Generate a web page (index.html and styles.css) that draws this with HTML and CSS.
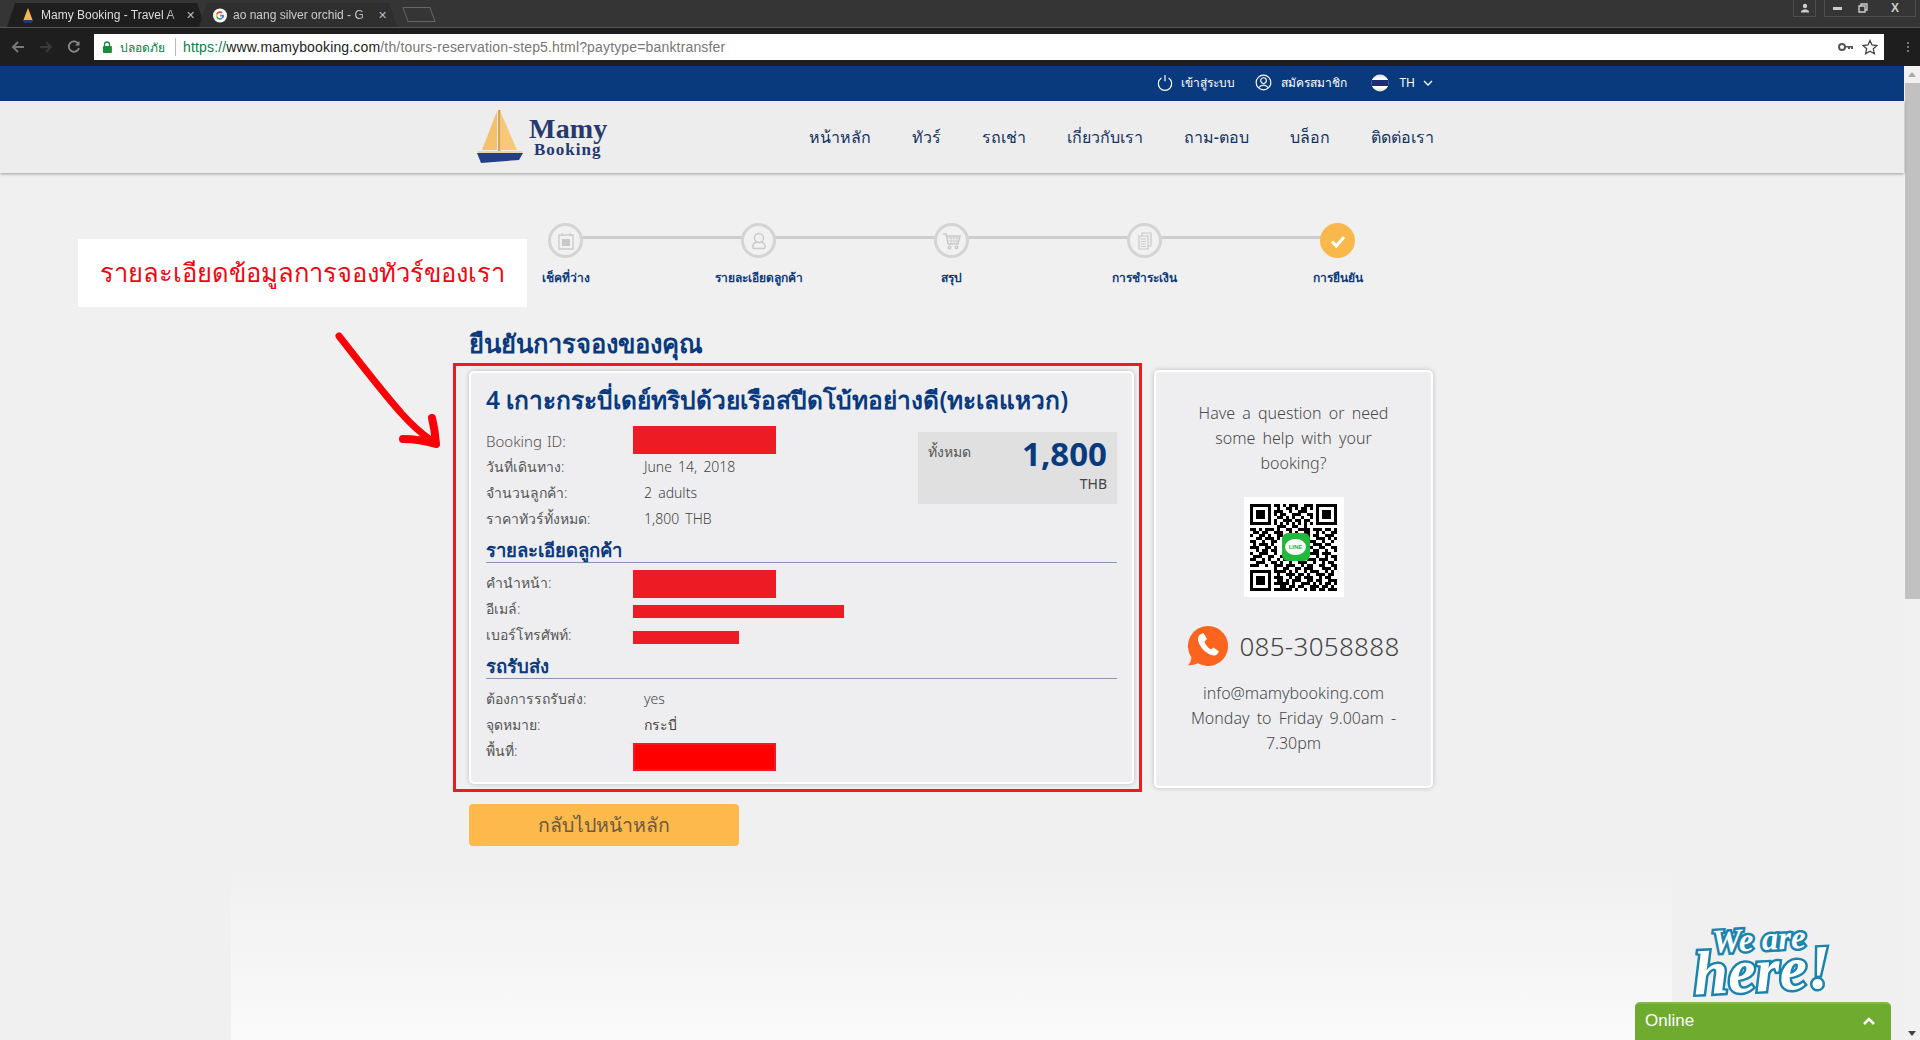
FILE: index.html
```html
<!DOCTYPE html>
<html lang="th">
<head>
<meta charset="utf-8">
<title>Mamy Booking</title>
<link rel="stylesheet" href="styles.css">
</head>
<body>
<div class="chrome">
  <div class="tabs">
    <div class="tab tab-active">
      <svg class="tab-ico" viewBox="0 0 14 16"><path d="M7 0 2 13h10z" fill="#f3b64c"/><path d="M1 13h12l-2 3H3z" fill="#1d3a78"/></svg>
      <span class="tab-title">Mamy Booking - Travel A</span><span class="tab-x">✕</span>
    </div>
    <div class="tab">
      <svg class="tab-ico" viewBox="0 0 16 16"><circle cx="8" cy="8" r="8" fill="#fff"/><path d="M8 3.2a4.8 4.8 0 0 1 3.2 1.2L9.900 5.700A3 3 0 0 0 5.200 7L3.700 5.800A4.800 4.800 0 0 1 8 3.200z" fill="#ea4335"/><path d="M3.700 5.800 5.200 7a3 3 0 0 0 0 2L3.700 10.200a4.800 4.800 0 0 1 0-4.400z" fill="#fbbc05"/><path d="M3.700 10.200 5.200 9a3 3 0 0 0 4.500 1.500l1.500 1.200A4.800 4.800 0 0 1 3.700 10.200z" fill="#34a853"/><path d="M8 7.200h4.700a4.800 4.800 0 0 1-1.500 4.500L9.700 10.500a2 2 0 0 0 .8-1.500H8z" fill="#4285f4"/></svg>
      <span class="tab-title">ao nang silver orchid - G</span><span class="tab-x">✕</span>
    </div>
    <div class="tab-new"></div>
    <div class="win-btns">
      <span class="win-user"><svg viewBox="0 0 10 10" width="10" height="10"><circle cx="5" cy="3" r="2.200" fill="#ccc"/><path d="M1 9.500h8V8Q5 4.500 1 8z" fill="#ccc"/></svg></span>
      <span class="win-group">
        <span class="win-btn"><span class="win-min"></span></span>
        <span class="win-btn"><svg viewBox="0 0 10 10" width="10" height="10" fill="none" stroke="#ccc" stroke-width="1.400"><path d="M3 3V1h6v6H7M1 3h6v6H1z"/></svg></span>
        <span class="win-btn win-close">X</span>
      </span>
    </div>
  </div>
  <div class="toolbar">
    <svg class="nav-ico" viewBox="0 0 14 14"><path d="M13 7H2M7 2 2 7l5 5" fill="none" stroke="#777" stroke-width="2"/></svg>
    <svg class="nav-ico" viewBox="0 0 14 14"><path d="M1 7h11M7 2l5 5-5 5" fill="none" stroke="#3a3a3a" stroke-width="2"/></svg>
    <svg class="nav-ico" viewBox="0 0 14 14"><path d="M11.500 4A5.200 5.200 0 1 0 12 8" fill="none" stroke="#8a8a8a" stroke-width="1.800"/><path d="M12.500 1v4.500H8z" fill="#8a8a8a"/></svg>
    <div class="omnibox">
      <svg class="lock" viewBox="0 0 10 12"><path d="M2.500 5V3.500a2.500 2.500 0 0 1 5 0V5" fill="none" stroke="#1b8a3a" stroke-width="1.300"/><rect y="5" width="10" height="7" rx="1" x="1" fill="#1b8a3a" transform="scale(.9 1)"/></svg>
      <span class="secure">ปลอดภัย</span>
      <span class="url"><span class="u-https">https://</span><span class="u-host">www.mamybooking.com</span>/th/tours-reservation-step5.html?paytype=banktransfer</span>
      <span class="omni-right">
        <svg viewBox="0 0 16 10" width="16" height="10"><circle cx="4" cy="5" r="3" fill="none" stroke="#555" stroke-width="2"/><path d="M7 4h8v3h-2V5.500h-1V7h-2V5.500H7z" fill="#555"/></svg>
        <svg viewBox="0 0 16 16" width="16" height="16"><path d="M8 1.500 10 6l5 .5-3.700 3.300 1.100 4.900L8 12.200l-4.400 2.500 1.100-4.900L1 6.500 6 6z" fill="none" stroke="#444" stroke-width="1.300"/></svg>
      </span>
    </div>
    <span class="kebab"><i></i><i></i><i></i></span>
  </div>
</div>

<div class="viewport">
  <main class="page">
    <div class="topbar">
      <span class="top-item"><svg viewBox="0 0 18 20" width="16" height="18"><path d="M5 4.500a7.500 7.500 0 1 0 8 0M9 1v7" fill="none" stroke="#fff" stroke-width="1.300"/></svg>เข้าสู่ระบบ</span>
      <span class="top-item top-user"><svg viewBox="0 0 18 18" width="17" height="17" fill="none" stroke="#fff" stroke-width="1.200"><circle cx="9" cy="9" r="7.800"/><circle cx="9" cy="7" r="3"/><path d="M3.800 14.500Q9 9 14.200 14.500"/></svg>สมัครสมาชิก</span>
      <span class="top-item top-lang"><svg viewBox="0 0 18 18" width="18" height="18"><defs><clipPath id="fc"><circle cx="9" cy="9" r="8.500"/></clipPath></defs><g clip-path="url(#fc)"><rect width="18" height="18" fill="#e8e8ee"/><rect y="6" width="18" height="6" fill="#1b2f6e"/><rect y="3.500" width="18" height="2.500" fill="#fff"/><rect y="12" width="18" height="2.500" fill="#fff"/></g></svg>TH<svg class="chev" viewBox="0 0 10 6" width="10" height="6"><path d="M1 1l4 4 4-4" fill="none" stroke="#fff" stroke-width="1.300"/></svg></span>
    </div>
    <header class="mainnav">
      <div class="logo">
        <svg class="logo-boat" viewBox="0 0 48 54" width="48" height="54"><path d="M21 1 6 40h15z" fill="#f5c26c"/><path d="M25 3v37h16z" fill="#f6c878"/><path d="M22 0h2.500v41H22z" fill="#dba34a"/><path d="M1 41h46l-1 2H2z" fill="#e9d7a8"/><path d="M1 43h46l-4 7-38 3z" fill="#233f82"/></svg>
        <div class="logo-text"><span class="logo-mamy">Mamy</span><span class="logo-book">Booking</span></div>
      </div>
      <nav class="menu">
        <a>หน้าหลัก</a><a>ทัวร์</a><a>รถเช่า</a><a>เกี่ยวกับเรา</a><a>ถาม-ตอบ</a><a>บล็อก</a><a>ติดต่อเรา</a>
      </nav>
    </header>

    <div class="container">
      <ol class="steps">
        <li class="step"><span class="dot"><svg viewBox="0 0 20 20" width="20" height="20"><path d="M3 4h14v14H3z" fill="none" stroke="#cbcbcb" stroke-width="1.300"/><path d="M6 2v3M14 2v3" stroke="#cbcbcb" stroke-width="1.300"/><path d="M6 8h8v7H6z" fill="#c9c9c9"/></svg></span><span class="step-label">เช็คที่ว่าง</span></li>
        <li class="step"><span class="dot"><svg viewBox="0 0 20 20" width="20" height="20" fill="none" stroke="#c9c9c9" stroke-width="1.400"><circle cx="10" cy="7" r="4.500"/><path d="M4 17.500q-1-5 3.500-6.500M4 17.500h11l1.500-1.500M12.500 11q3 1 4 5"/></svg></span><span class="step-label">รายละเอียดลูกค้า</span></li>
        <li class="step"><span class="dot"><svg viewBox="0 0 20 20" width="20" height="20" fill="none" stroke="#c9c9c9" stroke-width="1.400"><path d="M1 3h3l2 10h10l2-8H5"/><path d="M5 7h12M6 10h11M9 5v8M12 5v8M15 5v8" stroke-width=".8"/><circle cx="7.500" cy="16.500" r="1.300"/><circle cx="14.500" cy="16.500" r="1.300"/></svg></span><span class="step-label">สรุป</span></li>
        <li class="step"><span class="dot"><svg viewBox="0 0 20 20" width="20" height="20" fill="none" stroke="#c9c9c9" stroke-width="1.200"><path d="M7 2h9v13H7z"/><path d="M4 5h9v13H4z" fill="#f1f1f1"/><path d="M6 8h5M6 10.500h5M6 13h5M6 15.500h5"/></svg></span><span class="step-label">การชำระเงิน</span></li>
        <li class="step step-on"><span class="dot"><svg viewBox="0 0 20 20" width="20" height="20"><path d="M4 10.500 8.300 15 16 6" fill="none" stroke="#fff" stroke-width="3"/></svg></span><span class="step-label">การยืนยัน</span></li>
      </ol>

      <h1 class="confirm-title">ยืนยันการจองของคุณ</h1>

      <div class="content">
        <section class="card card-main">
          <h2 class="tour-title">4 เกาะกระบี่เดย์ทริปด้วยเรือสปีดโบ้ทอย่างดี(ทะเลแหวก)</h2>
          <div class="summary">
            <div class="rows">
              <div class="row"><span class="lbl lbl-en">Booking ID:</span><span class="redact r-big"></span></div>
              <div class="row"><span class="lbl">วันที่เดินทาง:</span><span class="val">June 14, 2018</span></div>
              <div class="row"><span class="lbl">จำนวนลูกค้า:</span><span class="val">2 adults</span></div>
              <div class="row"><span class="lbl">ราคาทัวร์ทั้งหมด:</span><span class="val">1,800 THB</span></div>
            </div>
            <div class="total">
              <div class="total-top"><span class="total-lbl">ทั้งหมด</span><span class="total-num">1,800</span></div>
              <div class="total-cur">THB</div>
            </div>
          </div>
          <h3 class="sec-title">รายละเอียดลูกค้า</h3>
          <div class="rows rows-sec">
            <div class="row"><span class="lbl">คำนำหน้า:</span><span class="redact r-big r-name"></span></div>
            <div class="row"><span class="lbl">อีเมล์:</span><span class="redact r-mail"></span></div>
            <div class="row"><span class="lbl">เบอร์โทรศัพท์:</span><span class="redact r-tel"></span></div>
          </div>
          <h3 class="sec-title">รถรับส่ง</h3>
          <div class="rows rows-sec">
            <div class="row"><span class="lbl">ต้องการรถรับส่ง:</span><span class="val">yes</span></div>
            <div class="row"><span class="lbl">จุดหมาย:</span><span class="val">กระบี่</span></div>
            <div class="row"><span class="lbl">พื้นที่:</span><span class="redact r-big r-pure"></span></div>
          </div>
        </section>

        <aside class="card card-side">
          <p class="help">Have a question or need some help with your booking?</p>
          <div class="qr">
            <svg viewBox="0 0 29 29" width="87" height="87" shape-rendering="crispEdges"><path fill="none" stroke="#000" d="M0 .5h7M0 6.500h7M0 1.500h1M6 1.500h1M0 2.500h1M2 2.500h3M6 2.500h1M0 3.500h1M2 3.500h3M6 3.500h1M0 4.500h1M2 4.500h3M6 4.500h1M0 5.500h1M6 5.500h1M22 .5h7M22 6.500h7M22 1.500h1M28 1.500h1M22 2.500h1M24 2.500h3M28 2.500h1M22 3.500h1M24 3.500h3M28 3.500h1M22 4.500h1M24 4.500h3M28 4.500h1M22 5.500h1M28 5.500h1M0 22.500h7M0 28.500h7M0 23.500h1M6 23.500h1M0 24.500h1M2 24.500h3M6 24.500h1M0 25.500h1M2 25.500h3M6 25.500h1M0 26.500h1M2 26.500h3M6 26.500h1M0 27.500h1M6 27.500h1M8 .5h2M11 .5h1M13 .5h3M18 .5h3M9 1.500h1M12 1.500h2M15 1.500h1M17 1.500h2M20 1.500h1M8 2.500h3M13 2.500h1M16 2.500h3M8 3.500h1M10 3.500h2M14 3.500h3M19 3.500h2M9 4.500h2M12 4.500h1M14 4.500h1M17 4.500h1M20 4.500h1M8 5.500h1M11 5.500h3M15 5.500h2M18 5.500h2M8 6.500h1M10 6.500h1M12 6.500h1M14 6.500h1M16 6.500h1M18 6.500h1M20 6.500h1M9 7.500h3M14 7.500h2M18 7.500h1M0 8.500h2M3 8.500h1M5 8.500h3M9 8.500h1M12 8.500h2M16 8.500h4M21 8.500h3M25 8.500h2M28 8.500h1M1 9.500h2M4 9.500h2M8 9.500h3M13 9.500h1M15 9.500h1M18 9.500h2M22 9.500h1M24 9.500h1M27 9.500h2M0 10.500h1M3 10.500h2M6 10.500h1M9 10.500h2M12 10.500h2M17 10.500h3M21 10.500h2M25 10.500h3M2 11.500h2M5 11.500h3M9 11.500h1M11 11.500h1M14 11.500h2M19 11.500h1M22 11.500h3M26 11.500h1M28 11.500h1M0 12.500h2M4 12.500h1M7 12.500h2M20 12.500h2M24 12.500h1M27 12.500h1M1 13.500h1M3 13.500h3M7 13.500h1M21 13.500h3M25 13.500h2M0 14.500h3M5 14.500h2M8 14.500h1M20 14.500h1M23 14.500h2M27 14.500h2M2 15.500h1M4 15.500h2M7 15.500h2M21 15.500h2M25 15.500h1M28 15.500h1M0 16.500h1M3 16.500h3M8 16.500h1M20 16.500h3M24 16.500h3M1 17.500h3M6 17.500h2M10 17.500h2M14 17.500h1M17 17.500h2M22 17.500h1M25 17.500h1M27 17.500h2M0 18.500h2M4 18.500h1M6 18.500h1M9 18.500h1M11 18.500h3M15 18.500h2M19 18.500h3M23 18.500h3M28 18.500h1M2 19.500h3M7 19.500h2M10 19.500h1M13 19.500h1M16 19.500h3M21 19.500h1M24 19.500h1M26 19.500h2M0 20.500h3M5 20.500h1M8 20.500h3M12 20.500h3M17 20.500h1M19 20.500h2M23 20.500h2M27 20.500h2M8 21.500h1M11 21.500h2M15 21.500h2M18 21.500h3M24 21.500h3M28 21.500h1M8 22.500h4M13 22.500h1M15 22.500h1M18 22.500h1M20 22.500h3M25 22.500h1M27 22.500h1M9 23.500h1M12 23.500h3M16 23.500h2M19 23.500h1M22 23.500h3M26 23.500h2M8 24.500h3M13 24.500h1M15 24.500h2M18 24.500h3M23 24.500h1M25 24.500h2M9 25.500h2M12 25.500h1M14 25.500h3M19 25.500h2M22 25.500h2M26 25.500h3M8 26.500h5M14 26.500h1M17 26.500h3M21 26.500h1M23 26.500h1M25 26.500h2M28 26.500h1M10 27.500h2M13 27.500h2M16 27.500h2M20 27.500h3M24 27.500h2M27 27.500h1M8 28.500h6M15 28.500h1M18 28.500h1M20 28.500h2M23 28.500h2M26 28.500h3"/></svg>
            <span class="line-badge"><span class="line-bubble">LINE</span></span>
          </div>
          <div class="phone">
            <svg viewBox="0 0 42 42" width="42" height="42"><path d="M21 1a20 20 0 1 1-10 37.300Q7 40 1 40.500q3-3 3.500-8A20 20 0 0 1 21 1z" fill="#fb641e"/><path d="M13 9.500l3.500-1.500 3.500 6-2.500 2.500q1.500 5 6.500 8l2.500-2 5.500 4-2 3q-3 2.500-9-1-8-5-10-13-.5-4 2-6z" fill="#fff"/></svg>
            <span class="phone-num">085-3058888</span>
          </div>
          <p class="contact">info@mamybooking.com<br>Monday to Friday 9.00am - 7.30pm</p>
        </aside>
      </div>

      <a class="home-btn">กลับไปหน้าหลัก</a>
    </div>
    <div class="fade"></div>
  </main>
  <div class="scrollbar">
    <svg class="sb-arrow" viewBox="0 0 8 5" width="8" height="5"><path d="M0 5 4 0l4 5z" fill="#aaa"/></svg>
    <div class="sb-thumb"></div>
    <svg class="sb-arrow sb-down" viewBox="0 0 8 5" width="8" height="5"><path d="M0 0l4 5 4-5z" fill="#444"/></svg>
  </div>

  <div class="note-banner">รายละเอียดข้อมูลการจองทัวร์ของเรา</div>
  <svg class="note-arrow" viewBox="0 0 110 120" width="110" height="120"><path d="M5 4C30 36 50 62 68 82S92 104 102 112" fill="none" stroke="#fb0007" stroke-width="7" stroke-linecap="round"/><path d="M98 86q3 12 4 26q-17-5-33-5" fill="none" stroke="#fb0007" stroke-width="8" stroke-linecap="round" stroke-linejoin="round"/></svg>
  <div class="note-box"></div>

  <div class="chat">
    <div class="chat-art"><span class="art-we">We are</span><span class="art-here">here!</span></div>
    <div class="chat-bar"><span>Online</span><svg viewBox="0 0 14 9" width="14" height="9"><path d="M2 7l5-5 5 5" fill="none" stroke="#fff" stroke-width="2.500"/></svg></div>
  </div>
</div>
</body>
</html>
```
FILE: styles.css
```css
* { box-sizing: border-box; }
html, body { margin: 0; height: 100%; overflow: hidden; }
body { font-family: "Noto Sans", "Open Sans", sans-serif; background: #f0f0f0; color: #444; width: 1920px; height: 1040px; }
h1, h2, h3, p, ol { margin: 0; padding: 0; }

.chrome { height: 66px; background: #1e1e1e; }
.tabs { height: 28px; background: #353535; border-bottom: 1px solid #555; display: flex; align-items: flex-end; padding-left: 7px; position: relative; }
.tab { width: 198px; height: 24px; margin-right: -6px; display: flex; align-items: center; gap: 6px; padding: 0 10px 0 14px; color: #ccc; font: 12px "Liberation Sans", sans-serif; background: #2f2f2f; clip-path: polygon(8px 0, calc(100% - 8px) 0, 100% 100%, 0 100%); }
.tab-active { background: #1e1e1e; color: #ddd; }
.tab-ico { width: 14px; height: 15px; flex: none; }
.tab-title { flex: 1; white-space: nowrap; -webkit-mask-image: linear-gradient(90deg, #000 90%, rgba(0,0,0,.35)); mask-image: linear-gradient(90deg, #000 90%, rgba(0,0,0,.35)); }
.tab-x { font-size: 11px; color: #bbb; }
.tab-new { width: 28px; height: 15px; margin: 0 0 5px 14px; border: 1px solid #666; transform: skewX(20deg); }
.win-btns { margin-left: auto; height: 17px; align-self: flex-start; display: flex; gap: 8px; margin-right: 4px; }
.win-user { width: 23px; height: 17px; border: 1px solid #4d4d4d; border-top: 0; display: flex; align-items: center; justify-content: center; }
.win-group { display: flex; border: 1px solid #4d4d4d; border-top: 0; }
.win-btn { width: 25px; height: 16px; display: flex; align-items: center; justify-content: center; color: #ccc; font: bold 12px "Liberation Sans", sans-serif; }
.win-close { width: 40px; }
.win-min { width: 9px; height: 3px; background: #ccc; }

.toolbar { height: 38px; display: flex; align-items: center; padding-left: 11px; }
.nav-ico { width: 14px; height: 14px; margin-right: 14px; flex: none; }
.omnibox { width: 1790px; margin-left: -1px; height: 26px; background: #fff; display: flex; align-items: center; padding-left: 8px; font: 14px "Liberation Sans", sans-serif; color: #777; white-space: nowrap; }
.lock { width: 10px; height: 12px; flex: none; }
.secure { color: #0b8043; font-size: 12px; margin: 0 10px 0 8px; font-family: "Noto Sans", sans-serif; }
.url { border-left: 1px solid #bbb; padding-left: 7px; line-height: 18px; letter-spacing: .16px; }
.u-https { color: #0b8043; }
.u-host { color: #222; }
.omni-right { margin-left: auto; display: flex; gap: 8px; align-items: center; padding-right: 6px; }
.kebab { display: flex; flex-direction: column; gap: 2px; margin-left: 23px; }
.kebab i { width: 2px; height: 2px; background: #777; }

.viewport { height: 974px; position: relative; overflow: hidden; display: flex; }
.page { width: 1904px; height: 974px; position: relative; }
.scrollbar { width: 16px; background: #f1f1f1; display: flex; flex-direction: column; align-items: center; padding-top: 6px; }
.sb-thumb { width: 15px; height: 516px; background: #c1c1c1; margin-top: 6px; }
.sb-down { margin-top: auto; margin-bottom: 4px; }

.topbar { height: 35px; background: #0a3a7e; color: #fff; display: flex; align-items: center; justify-content: flex-end; gap: 20px; padding: 0 471px 2px 0; font-size: 12px; }
.top-item { display: flex; align-items: center; gap: 8px; }
.top-user { gap: 9px; }
.top-lang { margin-left: 4px; gap: 10px; }
.chev { margin-left: -2px; }
.mainnav { height: 72px; background: #ededed; box-shadow: 0 1px 3px rgba(0,0,0,.35); display: flex; align-items: center; padding: 0 470px 0 476px; justify-content: space-between; position: relative; }
.logo { display: flex; align-items: center; gap: 5px; }
.logo-text { display: flex; flex-direction: column; color: #26396f; font-family: "Liberation Serif", serif; font-weight: bold; line-height: 1; margin-top: -1px; }
.logo-mamy { font-size: 28px; letter-spacing: .2px; line-height: 26px; }
.logo-book { font-size: 17px; letter-spacing: 1px; padding-left: 5px; line-height: 15px; }
.menu { display: flex; gap: 41px; font-size: 16px; color: #13325f; font-weight: 500; }

.container { width: 982px; margin-left: 469px; position: relative; z-index: 1; }
.steps { list-style: none; display: flex; height: 84px; margin-top: 50px; width: 966px; position: relative; }
.step { width: 193px; display: flex; flex-direction: column; align-items: center; position: relative; font-size: 12px; }
.step::before { content: ""; position: absolute; left: 96px; width: 193px; top: 13px; height: 3px; background: #cdcdcd; }
.step:last-child::before { display: none; }
.dot { width: 35px; height: 35px; border-radius: 50%; border: 3px solid #d4d4d4; background: #f1f1f1; display: flex; align-items: center; justify-content: center; position: relative; }
.step-on .dot { background: #f8b84b; border-color: #f8b84b; }
.step-label { margin-top: 10px; color: #0f3a7a; font-weight: 600; font-size: 12px; line-height: 20px; }
.confirm-title { font-size: 25.500px; line-height: 32px; height: 34px; color: #0a3a7e; font-weight: 700; margin-top: 20px; }

.content { display: flex; gap: 20px; margin-top: 10px; }
.card { background: #eeeef0; border: 2px solid #fff; border-radius: 5px; box-shadow: 0 0 5px rgba(0,0,0,.22); }
.card-main { width: 665px; height: 413px; padding: 13px 15px 0; }
.tour-title { font-size: 24.500px; line-height: 28px; height: 32px; color: #0a3a7e; font-weight: 600; white-space: nowrap; }
.summary { display: flex; justify-content: space-between; margin-top: 11px; }
.rows { display: flex; flex-direction: column; font-size: 14px; word-spacing: 2.500px; }
.row { height: 26px; display: flex; align-items: flex-start; line-height: 24px; }
.lbl { width: 147px; flex: none; color: #555; font-weight: 300; }
.lbl-en { font-size: 15px; word-spacing: 1px; }
.val { padding-left: 11px; color: #444; font-weight: 300; }
.redact { display: block; background: #ed1c24; width: 143px; }
.r-big { height: 28px; margin-top: -3px; }
.r-name { margin-top: -1px; }
.r-mail { height: 13px; width: 211px; margin-top: 8px; }
.r-tel { height: 13px; width: 106px; margin-top: 8px; }
.r-pure { background: #ff0000; border: 2px solid #ed1c24; margin-top: 4px; }
.total { width: 199px; height: 72px; background: #e0e0e0; margin-top: 3px; padding: 0 10px; }
.total-top { display: flex; justify-content: space-between; height: 42px; align-items: flex-start; }
.total-lbl { font-size: 14px; line-height: 40px; color: #555; font-weight: 300; }
.total-num { font-size: 33px; font-weight: 700; color: #0a3a7e; line-height: 44px; }
.total-cur { text-align: right; font-size: 14px; line-height: 20px; color: #444; }
.sec-title { font-size: 18.500px; font-weight: 700; color: #0a3a7e; line-height: 20px; border-bottom: 1px solid #8a94b8; margin-top: 7px; height: 23px; }
.rows-sec { margin-top: 8px; }

.card-side { width: 279px; height: 418px; display: flex; flex-direction: column; align-items: center; padding: 29px 30px 0; margin-top: -1px; }
.help { font-size: 16px; line-height: 25px; text-align: center; color: #4a4a4a; font-weight: 300; word-spacing: 3px; }
.qr { width: 100px; height: 100px; background: #fff; margin-top: 21px; display: flex; align-items: center; justify-content: center; position: relative; flex: none; }
.line-badge { position: absolute; left: 38px; top: 36px; width: 28px; height: 28px; border-radius: 6px; background: #22b83c; display: flex; align-items: center; justify-content: center; }
.line-bubble { width: 21px; height: 16px; background: #fff; color: #22b83c; font: bold 6px "Liberation Sans", sans-serif; border-radius: 50%; line-height: 16px; text-align: center; }
.phone { display: flex; align-items: center; gap: 10px; margin-top: 28px; width: 230px; justify-content: center; }
.phone-num { font-size: 26px; line-height: 40px; color: #444; letter-spacing: .3px; white-space: nowrap; font-weight: 300; }
.contact { font-size: 16px; line-height: 25px; text-align: center; color: #4a4a4a; margin-top: 14px; font-weight: 300; word-spacing: 3px; }

.home-btn { display: flex; width: 270px; height: 42px; margin-top: 16px; background: #fdb94c; border-radius: 4px; align-items: center; justify-content: center; font-size: 19.500px; color: #6b5a3e; font-weight: 300; }
.fade { position: absolute; left: 231px; right: 232px; top: 800px; bottom: 0; background: linear-gradient(#f0f0f0, #fafafa); }

.note-banner { position: absolute; left: 78px; top: 173px; width: 449px; height: 68px; background: #fff; color: #f0060f; font-family: "Liberation Serif", serif; font-size: 25.500px; display: flex; align-items: center; justify-content: center; white-space: nowrap; z-index: 3; }
.note-arrow { position: absolute; left: 334px; top: 266px; z-index: 3; }
.note-box { position: absolute; left: 453px; top: 297px; width: 689px; height: 429px; border: 3px solid #ed1c24; z-index: 3; pointer-events: none; }

.chat { position: absolute; left: 1635px; top: 856px; width: 256px; height: 118px; z-index: 4; display: flex; flex-direction: column; }
.chat-art { height: 80px; position: relative; font-family: "Liberation Serif", serif; font-style: italic; font-weight: bold; color: #fff; -webkit-text-stroke: 5px #1b83ad; paint-order: stroke fill; transform: rotate(-3deg); }
.art-we { position: absolute; left: 78px; top: 1px; font-size: 33px; line-height: 32px; white-space: nowrap; }
.art-here { position: absolute; left: 58px; top: 18px; font-size: 62px; line-height: 60px; white-space: nowrap; }
.chat-bar { height: 38px; margin-top: auto; background: #6fab2f; border-radius: 5px 5px 0 0; border-top: 2px solid #82b84a; display: flex; align-items: center; justify-content: space-between; padding: 0 15px 2px 10px; color: #fff; font: 17px "Liberation Sans", sans-serif; }
```
